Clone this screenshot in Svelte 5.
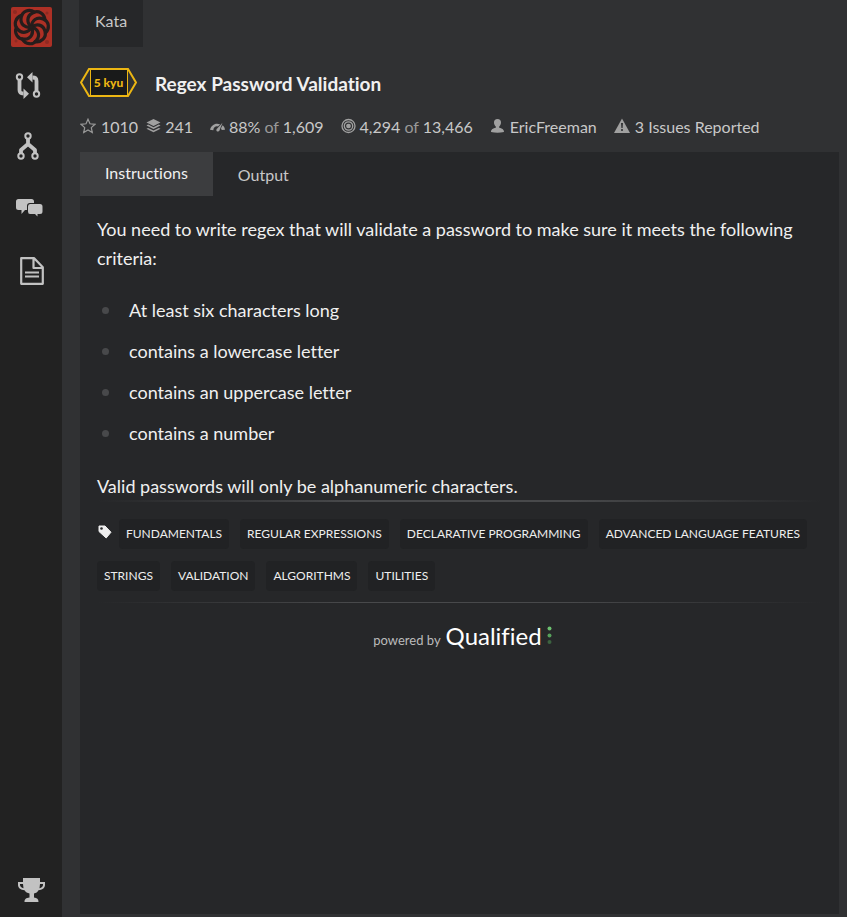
<script>
  const tags = [
    'Fundamentals', 'Regular Expressions', 'Declarative Programming', 'Advanced Language Features',
    'Strings', 'Validation', 'Algorithms', 'Utilities'
  ];
  const criteria = [
    'At least six characters long',
    'contains a lowercase letter',
    'contains an uppercase letter',
    'contains a number'
  ];
  const arms = [0, 1, 2, 3, 4, 5, 6].map((n) => (n * 360) / 7);
  let active = $state('Instructions');
</script>

<div class="app">
  <nav class="sidebar" aria-label="Main">
    <a class="logo" href="#home" aria-label="Home">
      <svg width="41" height="40" viewBox="0 0 41 40">
        <rect width="41" height="40" rx="2" fill="#ad3025" />
        <g fill="#8e2a22"><circle cx="4" cy="5" r="2" /><circle cx="36" cy="35" r="2" /><circle cx="5" cy="34" r="1.5" /><circle cx="36" cy="6" r="1.5" /></g>
        <g fill="none" stroke="#251d1c" stroke-width="3.2" stroke-linecap="round">
          {#each arms as angle}
            <path transform="translate(20.500 20) rotate({angle})" d="M0 0C-5 -4 -5 -11 1 -14C7 -17.500 13 -13 13.500 -7" />
          {/each}
        </g>
      </svg>
    </a>
    <a class="item kumite" href="#train" aria-label="Train">
      <svg width="26" height="28" viewBox="0 0 26 28" fill="none" stroke="#c2c2c2" stroke-width="3.800">
        <circle cx="4.500" cy="5" r="2.700" stroke-width="2" />
        <circle cx="21.500" cy="22" r="2.700" stroke-width="2" />
        <path d="M4.500 8v10c0 2.500 1 3.500 4 3.500M21.500 19V9c0-2.500-1-3.500-4-3.500" />
        <path d="M8.500 16.500l5.500 5.200-5.500 5.300zM17.500 0L12 5.200l5.500 5.200z" fill="#c2c2c2" stroke="none" />
      </svg>
    </a>
    <a class="item fork" href="#kumite" aria-label="Kumite">
      <svg width="22" height="28" viewBox="0 0 22 28" fill="none" stroke="#c2c2c2" stroke-width="3.800">
        <circle cx="11" cy="4" r="2.700" stroke-width="2" />
        <circle cx="4" cy="24" r="2.700" stroke-width="2" />
        <circle cx="18" cy="24" r="2.700" stroke-width="2" />
        <path d="M11 7v6M4 21v-3l7-6 7 6v3" stroke-linejoin="round" />
      </svg>
    </a>
    <a class="item chat" href="#discuss" aria-label="Discussions">
      <svg width="27" height="18" viewBox="0 0 27 18" fill="#c2c2c2">
        <path d="M2.500 0h13q2.500 0 2.500 2.500V4h-4q-3 0-3 3v4H9l-3.500 4v-4h-3Q0 11 0 8.500v-6Q0 0 2.500 0z" />
        <path d="M14 5h10q2.500 0 2.500 2.500v5Q26.500 15 24 15h-2.500v2.500L19 15h-5q-2 0-2-2.500v-5Q12 5 14 5z" />
      </svg>
    </a>
    <a class="item docs" href="#docs" aria-label="Docs">
      <svg width="24" height="28" viewBox="0 0 24 28" fill="none" stroke="#c2c2c2" stroke-width="2.200" stroke-linejoin="round">
        <path d="M1.200 1.200h13l8.600 9v16.600H1.200zM13.500 1.500V11h9M5 15.500h14M5 19.500h14" />
      </svg>
    </a>
    <a class="item trophy" href="#leaders" aria-label="Leaderboards">
      <svg width="27" height="24" viewBox="0 0 27 24" fill="#c2c2c2">
        <path d="M5 0h17v4h5v3c0 3-3 5-6.500 5.200-1 1.800-2.500 2.800-4.500 3.300v4c3 .5 4.500 1.500 4.500 4.500h-14c0-3 1.500-4 5-4.500v-4c-2-.5-4-1.500-5-3.300C3 12 0 10 0 7V4h5zM5 6H2v1c0 1.500 1.500 2.800 3.500 3.200zM22 6l-.5 4.200C23.500 9.800 25 8.500 25 7V6z" fill-rule="evenodd" />
      </svg>
    </a>
  </nav>

  <main>
    <a class="crumb" href="#kata">Kata</a>

    <header>
      <span class="rank">
        <svg width="57" height="29" viewBox="0 0 57 29" fill="none" stroke="#ecb613" stroke-width="2">
          <path d="M10 1h37v27H10z" fill="#191a1a" stroke="none" />
          <path d="M10.500 1v27M47.500 1v27" stroke-width="1" />
          <path d="M9 1h39l8 13.500-8 13.500H9L1 14.500z" />
        </svg>
        <span>5 kyu</span>
      </span>
      <h1>Regex Password Validation</h1>
    </header>

    <div class="stats">
      <button class="stars">
        <svg width="16" height="16" viewBox="0 0 16 16" fill="none" stroke="#999" stroke-width="1.200"><path d="M8 1.200l2 4.600 5 .5-3.700 3.300 1 5L8 12l-4.300 2.600 1-5L1 6.300l5-.5z" /></svg>
        <span>1010</span>
      </button>
      <div>
        <svg width="15" height="16" viewBox="0 0 16 16" fill="#a0a0a0"><path d="M8 .5l7.500 3.700L8 8 .5 4.200zM2.300 6.500L8 9.400l5.700-2.900 1.800.9L8 11.200.5 7.400zM2.300 10L8 12.900l5.700-2.900 1.800.9L8 14.700.5 10.900z" /></svg>
        <span>241</span>
      </div>
      <div>
        <svg width="15" height="16" viewBox="0 0 16 16" fill="#a0a0a0"><path d="M0 12C1 8 4 5.500 7.500 5.500c1.200 0 2.300.2 3.300.7L8.500 8.500C6 8 4 9 3.500 12.500zM13.300 4.500L10 13c-.5 1.300-3.300 1.200-3.200-.8.100-1 .8-1.400 1.400-2zM13.500 7.200c1.500 1.200 2.300 2.800 2.500 4.800l-3.500.3-.8-2z" /></svg>
        <span>88% <i>of</i> 1,609</span>
      </div>
      <div>
        <svg width="15" height="16" viewBox="0 0 15 16" fill="none" stroke="#a0a0a0" stroke-width="1.300"><circle cx="7.500" cy="8" r="6.500" /><circle cx="7.500" cy="8" r="4.200" /><circle cx="7.500" cy="8" r="1.700" fill="#a0a0a0" /></svg>
        <span>4,294 <i>of</i> 13,466</span>
      </div>
      <a class="author" href="#author">
        <svg width="15" height="16" viewBox="0 0 15 16" fill="#a0a0a0"><path d="M7.500 1C9.800 1 11 2.500 11 4.500c0 1.800-.8 3.200-1.800 4v1.200c2.800.8 4.800 1.400 4.800 4.300q-6.500 1.500-13 0c0-2.900 2-3.500 4.800-4.300V8.500C4.800 7.700 4 6.300 4 4.500 4 2.500 5.200 1 7.500 1z" /></svg>
        <span>EricFreeman</span>
      </a>
      <a class="issues" href="#issues">
        <svg width="16" height="16" viewBox="0 0 16 16"><path d="M8 .5L16 15H0z" fill="#a0a0a0" /><path d="M7 5h2l-.4 5H7.400zM7.200 11h1.600v2H7.200z" fill="#303133" /></svg>
        <span>3 Issues Reported</span>
      </a>
    </div>

    <section class="panel">
      <div class="tabs" role="tablist">
        {#each ['Instructions', 'Output'] as tab}
          <button role="tab" class:active={active === tab} aria-selected={active === tab} onclick={() => (active = tab)}>{tab}</button>
        {/each}
      </div>
      <div class="body">
        <p>You need to write regex that will validate a password to make sure it meets the following criteria:</p>
        <ul>
          {#each criteria as item}<li>{item}</li>{/each}
        </ul>
        <p>Valid passwords will only be alphanumeric characters.</p>
        <div class="rule thick"></div>
        <div class="tags">
          <svg class="tag-icon" width="14" height="14" viewBox="0 0 14 14"><path d="M1 1h6l6 6.200L8.200 13 1 6.500z" fill="#eee" stroke="#eee" stroke-linejoin="round" /><circle cx="3.500" cy="3.500" r="1.300" fill="#262729" /></svg>
          {#each tags as tag}<span class="tag">{tag}</span>{/each}
        </div>
        <div class="rule"></div>
        <a class="powered" href="#qualified">
          <span>powered by</span>
          <strong>Qualified</strong>
          <svg width="5" height="19" viewBox="0 0 5 19"><circle cx="2.500" cy="2.500" r="2" fill="#6cc070" /><circle cx="2.500" cy="9.500" r="2" fill="#56a05b" /><circle cx="2.500" cy="16" r="2" fill="#3c6340" /></svg>
        </a>
      </div>
    </section>
  </main>
</div>

<style>
  :global(body) {
    margin: 0;
    background: #303133;
  }
  .app {
    display: flex;
    min-height: 100vh;
    font-family: Lato, "Liberation Sans", sans-serif;
    font-size: 16px;
    font-variant-ligatures: none;
    color: #c8c8c8;
  }
  a {
    color: inherit;
    text-decoration: none;
  }
  button {
    font: inherit;
    font-variant-ligatures: none;
    color: inherit;
    background: none;
    border: 0;
    padding: 0;
    cursor: pointer;
  }
  svg {
    display: block;
    flex: none;
  }
  .sidebar {
    width: 62px;
    flex: none;
    box-sizing: border-box;
    background: #222;
    display: flex;
    flex-direction: column;
    align-items: flex-start;
    padding: 7px 0 15px;
  }
  .logo { margin-left: 11px; }
  .item { margin-left: 16px; }
  .kumite { margin-top: 25px; margin-left: 15px; }
  .fork { margin-top: 32px; margin-left: 17px; }
  .chat { margin-top: 39px; }
  .docs { margin-top: 40px; margin-left: 20px; }
  .trophy { margin-top: auto; margin-left: 18px; }
  main {
    flex: 1;
    min-width: 0;
    display: flex;
    flex-direction: column;
    align-items: flex-start;
    padding: 0 8px 3px 18px;
  }
  .crumb {
    background: #262729;
    line-height: 20px;
    padding: 11px 16px 16px;
    margin-left: -1px;
  }
  header {
    display: flex;
    align-items: center;
    gap: 18px;
    margin-top: 21px;
  }
  .rank {
    display: grid;
    place-items: center;
  }
  .rank > * {
    grid-area: 1 / 1;
  }
  .rank span {
    font-size: 12px;
    font-weight: 900;
    color: #ecb613;
  }
  h1 {
    margin: 3px 0 0;
    font-size: 19px;
    line-height: 24px;
    font-weight: 700;
    color: #f0f0f0;
  }
  .stats {
    display: flex;
    flex-wrap: wrap;
    column-gap: 17px;
    margin: 20px 0 15px;
    line-height: 20px;
  }
  .stats > * {
    display: flex;
    align-items: center;
    gap: 4px;
    white-space: nowrap;
  }
  .stats svg {
    margin-bottom: 2px;
  }
  .stats .stars {
    margin-right: -9px;
    gap: 5px;
  }
  .stats .author,
  .stats .issues {
    gap: 5px;
  }
  .stats i {
    font-style: normal;
    color: #999;
  }
  .panel {
    flex: 1;
    align-self: stretch;
    background: #262729;
  }
  .tabs {
    display: flex;
  }
  .tabs button {
    height: 44px;
    padding: 0 25px;
  }
  .tabs .active {
    background: #3c3d3f;
    color: #f0f0f0;
    padding-bottom: 3px;
  }
  .body {
    padding: 19px 17px;
  }
  p {
    margin: 0;
    font-size: 18px;
    line-height: 29px;
    color: #f0f0f0;
  }
  ul {
    list-style: none;
    margin: 17px 0 18px;
    padding: 0;
    font-size: 18px;
    line-height: 29px;
    color: #f0f0f0;
  }
  li {
    display: flex;
    align-items: center;
    padding: 6px 0;
  }
  li::before {
    content: "";
    width: 7px;
    height: 7px;
    margin: 0 20px 1px 5px;
    border-radius: 50%;
    background: #48494b;
  }
  .rule {
    height: 1px;
    background: linear-gradient(to right, transparent, #48494b 35%, #48494b 65%, transparent);
  }
  .thick {
    height: 2px;
    margin-top: -1px;
  }
  .tags {
    display: flex;
    flex-wrap: wrap;
    gap: 12px 11px;
    padding: 17px 0 11px;
  }
  .tag-icon {
    margin: 6px -4px 0 1px;
  }
  .tag {
    background: #212224;
    border-radius: 4px;
    padding: 0 7px;
    font-size: 12px;
    line-height: 30px;
    text-transform: uppercase;
    color: #eee;
  }
  .powered {
    display: flex;
    justify-content: center;
    align-items: baseline;
    gap: 5px;
    margin-top: 19px;
    padding-left: 6px;
    font-size: 13px;
    color: #bbb;
  }
  .powered strong {
    font-size: 24px;
    line-height: 28px;
    font-weight: 400;
    color: #fff;
  }
</style>
